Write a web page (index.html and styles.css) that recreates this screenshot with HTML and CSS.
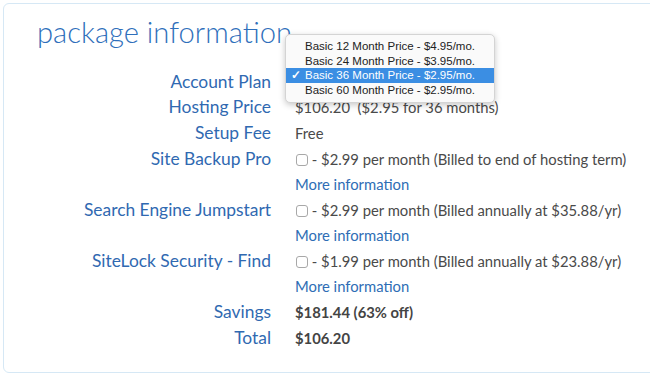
FILE: index.html
```html
<!DOCTYPE html>
<html lang="en">
  <head>
    <meta charset="UTF-8" />
    <meta name="viewport" content="width=device-width, initial-scale=1.0" />
    <title>Package Information</title>
    <link rel="stylesheet" href="styles.css">
  </head>
  <body>
    <div class="panel">
      <h2 class="panel-title">package information</h2>
      <div class="details">
        <div class="label">Account Plan</div>
        <div class="value plan-cell">
          <div class="plan-menu">
            <div class="plan-option">Basic 12 Month Price - $4.95/mo.</div>
            <div class="plan-option">Basic 24 Month Price - $3.95/mo.</div>
            <div class="plan-option selected"><span class="check">✓</span>Basic 36 Month Price - $2.95/mo.</div>
            <div class="plan-option">Basic 60 Month Price - $2.95/mo.</div>
          </div>
        </div>

        <div class="label">Hosting Price</div>
        <div class="value">$106.20&nbsp; ($2.95 for 36 months)</div>

        <div class="label">Setup Fee</div>
        <div class="value">Free</div>

        <div class="label">Site Backup Pro</div>
        <div class="value"><span class="box"></span> - $2.99 per month (Billed to end of hosting term)</div>
        <div class="label"></div>
        <div class="value"><a class="more" href="#">More information</a></div>

        <div class="label">Search Engine Jumpstart</div>
        <div class="value"><span class="box"></span> - $2.99 per month (Billed annually at $35.88/yr)</div>
        <div class="label"></div>
        <div class="value"><a class="more" href="#">More information</a></div>

        <div class="label">SiteLock Security - Find</div>
        <div class="value"><span class="box"></span> - $1.99 per month (Billed annually at $23.88/yr)</div>
        <div class="label"></div>
        <div class="value"><a class="more" href="#">More information</a></div>

        <div class="label">Savings</div>
        <div class="value strong">$181.44 (63% off)</div>

        <div class="label">Total</div>
        <div class="value strong">$106.20</div>
      </div>
    </div>
  </body>
</html>
```

FILE: styles.css
```css
* {
  margin: 0;
  padding: 0;
  box-sizing: border-box;
}
body {
  font-family: Lato, "Open Sans", Arial, sans-serif;
  background: #fff;
  overflow: hidden;
  height: 373px;
}
.panel {
  margin: 3px 0 0 3px;
  width: 660px;
  height: 370px;
  border: 1px solid #d6e8f5;
  border-radius: 6px;
}
.panel-title {
  margin: 10px 0 0 33px;
  font-size: 29.2px;
  line-height: 35px;
  font-weight: 300;
  color: #2f6fbb;
}
.details {
  margin-top: 20px;
  display: grid;
  grid-template-columns: 267px 1fr;
  column-gap: 24px;
  align-items: baseline;
}
.label {
  text-align: right;
  font-size: 17.4px;
  line-height: 25px;
  color: #3069b1;
}
.value {
  font-size: 14.8px;
  line-height: 25px;
  color: #4a4a4a;
  white-space: nowrap;
}
.value.strong {
  font-weight: 700;
  color: #444;
}
.box {
  display: inline-block;
  width: 12px;
  height: 12px;
  margin-left: 1px;
  border: 1px solid #a8a8a8;
  border-radius: 3px;
  vertical-align: -1px;
}
.more {
  color: #2e6db5;
  text-decoration: none;
}
.plan-cell {
  position: relative;
  align-self: stretch;
}
.plan-menu {
  position: absolute;
  left: -10px;
  top: -35px;
  width: 210px;
  padding: 4px 0;
  background: #fafafa;
  border: 1px solid #d4d4d4;
  border-radius: 5px;
  box-shadow: 0 2px 6px rgba(0, 0, 0, 0.22);
  z-index: 10;
}
.plan-option {
  position: relative;
  padding-left: 19px;
  font-family: "Liberation Sans", Arial, sans-serif;
  font-size: 11.5px;
  line-height: 14.7px;
  color: #222;
}
.plan-option.selected {
  background: #3b8ee3;
  color: #fff;
}
.check {
  position: absolute;
  left: 5px;
  font-weight: 700;
}
```
